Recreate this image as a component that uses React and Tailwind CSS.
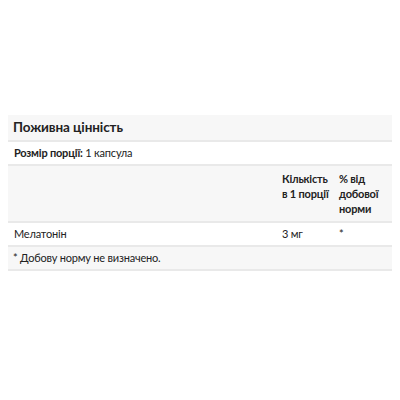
export default function App() {
  return (
    <div className="w-[400px] h-[400px] bg-white pt-[115px] px-2" style={{ fontFamily: "Lato, 'Noto Sans', sans-serif" }}>
      <div className="text-[#222] text-[11px] tracking-[-0.2px]">
        <div className="bg-[#f7f7f7] h-[27px] flex items-center pl-[5px] border-b-2 border-[#e9e9e9]">
          <span className="font-bold text-[13.5px] tracking-[-0.1px]">Поживна цінність</span>
        </div>
        <div className="h-[24px] flex items-center pl-[6px] border-b-2 border-[#e9e9e9]">
          <span className="font-bold">Розмір порції:</span>&nbsp;<span>1 капсула</span>
        </div>
        <div className="bg-[#f7f7f7] grid grid-cols-[1fr_57px_56px] border-b-2 border-[#e9e9e9] pt-[5px] pb-[5px]">
          <div></div>
          <div className="font-bold leading-[15px] pl-[3px]">Кількість<br />в 1 порції</div>
          <div className="font-bold leading-[15px] pl-[3px]">% від<br />добової<br />норми</div>
        </div>
        <div className="grid grid-cols-[1fr_57px_56px] h-[24px] items-center border-b-2 border-[#e9e9e9]">
          <div className="pl-[6px]">Мелатонін</div>
          <div className="pl-[3px]">3 мг</div>
          <div className="pl-[3px]">*</div>
        </div>
        <div className="bg-[#f7f7f7] h-[24px] flex items-center pl-[5px] border-b-2 border-[#e9e9e9]">
          * Добову норму не визначено.
        </div>
      </div>
    </div>
  );
}
